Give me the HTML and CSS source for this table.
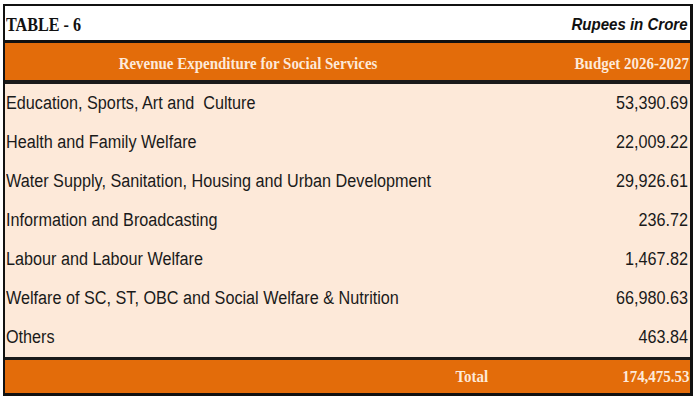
FILE: index.html
```html
<!DOCTYPE html>
<html>
<head>
<meta charset="utf-8">
<link rel="stylesheet" href="styles.css">
</head>
<body>
<div class="table">
  <div class="title-row">
    <span class="title">TABLE - 6</span>
    <span class="unit">Rupees in Crore</span>
  </div>
  <div class="head-row">
    <div class="cell center"><span class="head-text origin-center">Revenue Expenditure for Social Services</span></div>
    <div class="cell right"><span class="head-text origin-right">Budget 2026-2027</span></div>
  </div>
  <div class="body">
    <div class="row"><span class="label">Education, Sports, Art and&nbsp; Culture</span><span class="value">53,390.69</span></div>
    <div class="row"><span class="label">Health and Family Welfare</span><span class="value">22,009.22</span></div>
    <div class="row"><span class="label">Water Supply, Sanitation, Housing and Urban Development</span><span class="value">29,926.61</span></div>
    <div class="row"><span class="label">Information and Broadcasting</span><span class="value">236.72</span></div>
    <div class="row"><span class="label">Labour and Labour Welfare</span><span class="value">1,467.82</span></div>
    <div class="row"><span class="label">Welfare of SC, ST, OBC and Social Welfare &amp; Nutrition</span><span class="value">66,980.63</span></div>
    <div class="row"><span class="label">Others</span><span class="value">463.84</span></div>
  </div>
  <div class="total-row">
    <div class="cell right total-cell"><span class="head-text origin-right">Total</span></div>
    <div class="cell right"><span class="head-text origin-right">174,475.53</span></div>
  </div>
</div>
</body>
</html>
```
FILE: styles.css
```css
html, body {
  margin: 0;
  padding: 0;
  background: #ffffff;
}
body {
  padding: 4px 3px 0 3px;
}
.table {
  width: 690px;
  box-sizing: border-box;
  border: 2px solid #111111;
  border-right-width: 3px;
  border-bottom-width: 3px;
  display: flex;
  flex-direction: column;
}
.title-row {
  height: 37px;
  box-sizing: border-box;
  padding: 3px 2px 0 1px;
  background: #ffffff;
  display: flex;
  justify-content: space-between;
  align-items: center;
  border-bottom: 3px solid #111111;
}
.title {
  display: inline-block;
  font-family: "Liberation Serif", serif;
  font-weight: bold;
  font-size: 19px;
  color: #111111;
  transform: scaleX(0.85);
  transform-origin: left center;
}
.unit {
  display: inline-block;
  font-family: "Liberation Sans", sans-serif;
  font-weight: bold;
  font-style: italic;
  font-size: 16px;
  color: #111111;
  transform: scaleX(0.94);
  transform-origin: right center;
}
.head-row {
  height: 41px;
  box-sizing: border-box;
  padding-top: 4px;
  background: #e36c0a;
  display: grid;
  grid-template-columns: 486px 1fr;
  align-items: center;
  border-bottom: 4px solid #1a1a1a;
}
.cell {
  display: flex;
  align-items: center;
}
.center {
  justify-content: center;
}
.right {
  justify-content: flex-end;
  padding-right: 1px;
}
.head-text {
  display: inline-block;
  font-family: "Liberation Serif", serif;
  font-weight: bold;
  font-size: 17px;
  color: #fde9d9;
  transform: scaleX(0.88);
  white-space: nowrap;
}
.origin-center {
  transform-origin: center center;
}
.origin-right {
  transform-origin: right center;
}
.body {
  background: #fde9d9;
  display: flex;
  flex-direction: column;
}
.row {
  height: 39px;
  display: flex;
  justify-content: space-between;
  align-items: center;
  padding: 0 2px 0 1px;
}
.label, .value {
  display: inline-block;
  font-family: "Liberation Sans", sans-serif;
  font-size: 18px;
  color: #1a1a1a;
  transform: scaleX(0.9);
  white-space: nowrap;
}
.label {
  transform-origin: left center;
}
.value {
  transform-origin: right center;
}
.total-row {
  height: 36px;
  box-sizing: border-box;
  background: #e36c0a;
  display: grid;
  grid-template-columns: 486px 1fr;
  align-items: center;
  border-top: 3px solid #1a1a1a;
}
.total-cell {
  padding-right: 3px;
}
```
